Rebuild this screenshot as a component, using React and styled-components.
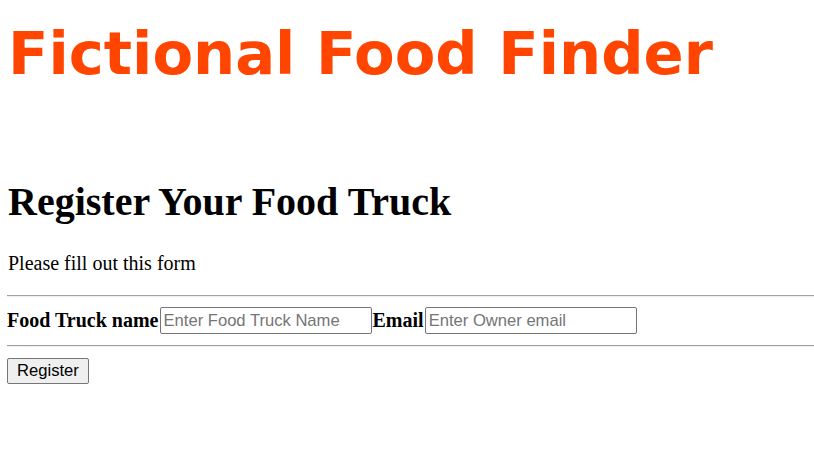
import React from 'react'
import styled, { createGlobalStyle } from 'styled-components'

const GlobalStyle = createGlobalStyle`
    html, body {
        margin: 0;
        padding: 0;
        background: #fff;
    }
    body {
        font-family: "Liberation Serif", "Times New Roman", serif;
        font-size: 20px;
        color: #000;
    }
`

function App() {
    return (
        <Page>
            <GlobalStyle />
            <Header>
                <Brand>Fictional Food Finder</Brand>
            </Header>

            <Main>
                <Heading>Register Your Food Truck</Heading>
                <Intro>Please fill out this form</Intro>

                <Rule />
                <FormRow>
                    <Label htmlFor="truck">Food Truck name</Label>
                    <TextInput id="truck" type="text" placeholder="Enter Food Truck Name" />
                    <Label htmlFor="email">Email</Label>
                    <TextInput id="email" type="email" placeholder="Enter Owner email" />
                </FormRow>
                <Rule />

                <RegisterButton type="button">Register</RegisterButton>
            </Main>
        </Page>
    )
}

export default App

const Page = styled.div`
    padding: 0 0 0 7px;
`

const Header = styled.header`
    padding-top: 19px;
    height: 181px;
    box-sizing: border-box;
`

const Brand = styled.h1`
    margin: 0;
    padding-left: 1px;
    font-family: "DejaVu Sans", Verdana, sans-serif;
    font-weight: bold;
    font-size: 59.2px;
    line-height: 69px;
    color: #ff4500;
`

const Main = styled.main`
    display: flex;
    flex-direction: column;
    align-items: flex-start;
`

const Heading = styled.h1`
    margin: 0;
    padding-left: 1px;
    font-size: 40px;
    font-weight: bold;
    line-height: 42px;
`

const Intro = styled.p`
    margin: 29px 0 0 1px;
    line-height: 22px;
`

const Rule = styled.hr`
    align-self: stretch;
    margin: 21px 0 0 0;
    border: none;
    border-top: 1px solid #a0a0a0;
    border-bottom: 1px solid #eee;
    height: 0;
`

const FormRow = styled.div`
    display: flex;
    align-items: center;
    margin-top: 10px;
    & + hr {
        margin-top: 11px;
    }
`

const Label = styled.label`
    font-weight: bold;
    font-size: 20px;
`

const TextInput = styled.input`
    width: 212px;
    height: 27px;
    box-sizing: border-box;
    margin: 0 1px 0 1px;
    padding: 1px 3px;
    border: 1px solid #767676;
    border-radius: 2px;
    font-family: "Liberation Sans", Arial, sans-serif;
    font-size: 16.6px;
    color: #000;
    &::placeholder {
        color: #757575;
    }
`

const RegisterButton = styled.button`
    margin: 11px 0 0 0;
    height: 26px;
    padding: 0 9px;
    background: #efefef;
    border: 1px solid #767676;
    border-radius: 2px;
    font-family: "Liberation Sans", Arial, sans-serif;
    font-size: 16.6px;
    color: #000;
`
